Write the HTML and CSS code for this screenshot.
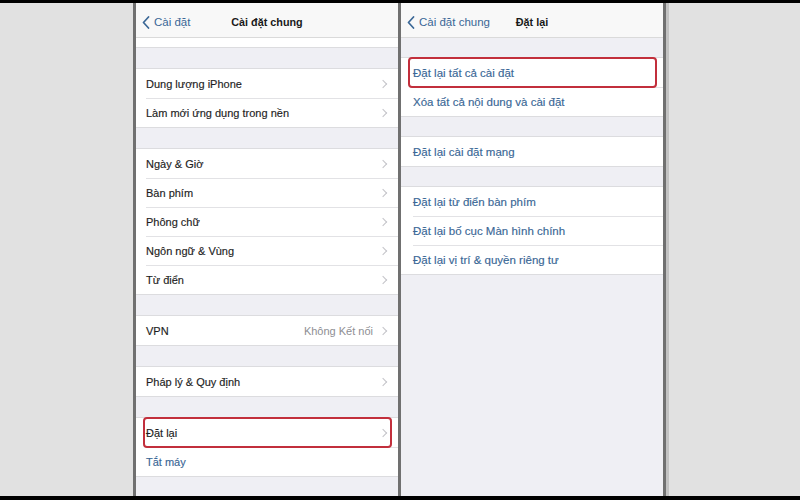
FILE: index.html
```html
<!DOCTYPE html>
<html lang="vi">
<head>
<meta charset="utf-8">
<link rel="stylesheet" href="styles.css">
</head>
<body>
<div class="frame">
  <div class="stage">
    <div class="side side-left"></div>

    <div class="phone phone-left">
      <div class="nav">
        <div class="back"><svg class="back-chev" width="8" height="13" viewBox="0 0 8 13"><polyline points="6.5,1 1.5,6.5 6.5,12" fill="none" stroke="#3a6796" stroke-width="1.7" stroke-linecap="round" stroke-linejoin="round"/></svg><span>Cài đặt</span></div>
        <div class="title">Cài đặt chung</div>
      </div>
      <div class="list">
        <div class="group group-clipped"></div>
        <div class="group">
          <div class="row"><span class="label">Dung lượng iPhone</span><span class="chev"></span></div>
          <div class="row"><span class="label">Làm mới ứng dụng trong nền</span><span class="chev"></span></div>
        </div>
        <div class="group">
          <div class="row"><span class="label">Ngày &amp; Giờ</span><span class="chev"></span></div>
          <div class="row"><span class="label">Bàn phím</span><span class="chev"></span></div>
          <div class="row"><span class="label">Phông chữ</span><span class="chev"></span></div>
          <div class="row"><span class="label">Ngôn ngữ &amp; Vùng</span><span class="chev"></span></div>
          <div class="row"><span class="label">Từ điển</span><span class="chev"></span></div>
        </div>
        <div class="group">
          <div class="row"><span class="label">VPN</span><span class="value">Không Kết nối</span><span class="chev"></span></div>
        </div>
        <div class="group">
          <div class="row"><span class="label">Pháp lý &amp; Quy định</span><span class="chev"></span></div>
        </div>
        <div class="group">
          <div class="row marked"><span class="label">Đặt lại</span><span class="chev"></span><span class="mark"></span></div>
          <div class="row"><span class="label link">Tắt máy</span></div>
        </div>
      </div>
    </div>

    <div class="phone phone-right">
      <div class="nav">
        <div class="back"><svg class="back-chev" width="8" height="13" viewBox="0 0 8 13"><polyline points="6.5,1 1.5,6.5 6.5,12" fill="none" stroke="#3a6796" stroke-width="1.7" stroke-linecap="round" stroke-linejoin="round"/></svg><span>Cài đặt chung</span></div>
        <div class="title">Đặt lại</div>
      </div>
      <div class="list">
        <div class="group">
          <div class="row marked"><span class="label link">Đặt lại tất cả cài đặt</span><span class="mark"></span></div>
          <div class="row"><span class="label link">Xóa tất cả nội dung và cài đặt</span></div>
        </div>
        <div class="group">
          <div class="row"><span class="label link">Đặt lại cài đặt mạng</span></div>
        </div>
        <div class="group">
          <div class="row"><span class="label link">Đặt lại từ điển bàn phím</span></div>
          <div class="row"><span class="label link">Đặt lại bố cục Màn hình chính</span></div>
          <div class="row"><span class="label link">Đặt lại vị trí &amp; quyền riêng tư</span></div>
        </div>
      </div>
    </div>

    <div class="side side-right"></div>
  </div>
</div>
</body>
</html>
```

FILE: styles.css
```css
html, body {
  margin: 0;
  padding: 0;
  background: #000;
}

.frame {
  width: 800px;
  height: 500px;
  box-sizing: border-box;
  padding: 3px 0 4px 0;
  background: #000;
  overflow: hidden;
}

.stage {
  display: flex;
  height: 100%;
  background: #e1e1e1;
  font-family: "Liberation Sans", Arial, sans-serif;
}

.side-left {
  width: 133px;
  flex: none;
}

.side-right {
  flex: 1;
}

.phone {
  flex: none;
  width: 262px;
  background: #efeff4;
  border-left: 3px solid #707070;
  display: flex;
  flex-direction: column;
  overflow: hidden;
  --pad: 10px;
  --fs: 11px;
  --gap: 20px;
}

.phone-right {
  border-right: 3px solid #707070;
  box-shadow: 3px 0 0 #c2c2c2;
  --pad: 12px;
  --fs: 11.5px;
  --gap: 19px;
}

.nav {
  flex: none;
  height: 35px;
  box-sizing: border-box;
  padding-top: 4px;
  background: #f8f8f8;
  border-bottom: 1px solid #dadada;
  display: grid;
  grid-template-columns: 1fr auto 1fr;
  align-items: center;
}

.back {
  grid-column: 1;
  grid-row: 1;
  display: flex;
  align-items: center;
  gap: 4px;
  padding-left: 6px;
  color: #3a6796;
  font-size: 11.5px;
  white-space: nowrap;
}

.title {
  grid-column: 2;
  grid-row: 1;
  font-size: 10.8px;
  font-weight: bold;
  color: #1a1a1a;
  white-space: nowrap;
}

.list {
  flex: 1;
  display: flex;
  flex-direction: column;
  gap: var(--gap);
  overflow: hidden;
}

.phone-right .list {
  padding-top: 19px;
}

.group {
  background: #fff;
  border-top: 1px solid #dcdcdf;
  border-bottom: 1px solid #dcdcdf;
}

.group-clipped {
  border-top: none;
  height: 9px;
}

.row {
  position: relative;
  height: 29px;
  box-sizing: border-box;
  display: flex;
  align-items: center;
  padding-left: var(--pad);
  padding-right: 10px;
  font-size: var(--fs);
  color: #1d1d1d;
}

.row + .row::before {
  content: "";
  position: absolute;
  top: 0;
  left: var(--pad);
  right: 0;
  border-top: 1px solid #e2e2e5;
}

.label {
  flex: 1;
  white-space: nowrap;
  -webkit-text-stroke: 0.15px currentColor;
}

.link {
  color: #3a6796;
}

.value {
  color: #8e8e93;
  margin-right: 7px;
  white-space: nowrap;
}

.chev {
  width: 5px;
  height: 5px;
  border-right: 1.5px solid #c3c3c8;
  border-top: 1.5px solid #c3c3c8;
  transform: rotate(45deg);
  margin-right: 2px;
}

.mark {
  position: absolute;
  left: 7px;
  right: 6px;
  top: -1px;
  bottom: -1px;
  border: 2px solid #c22f3c;
  border-radius: 4px;
  z-index: 1;
}
```
